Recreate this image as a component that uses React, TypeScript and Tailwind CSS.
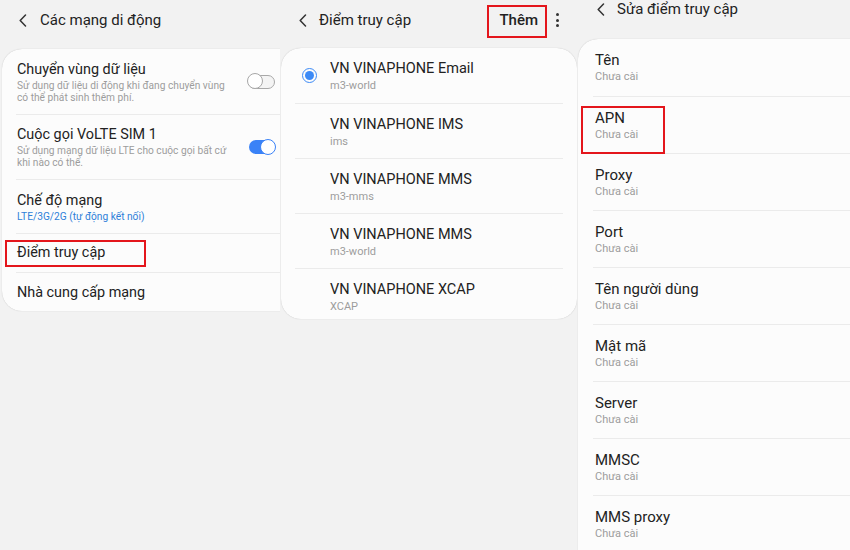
import React from "react";

const font = { fontFamily: "Roboto, 'Noto Sans', sans-serif" };

function Back() {
  return (
    <svg width="8" height="13" viewBox="0 0 8 13" fill="none">
      <path d="M6.5 1 L1.2 6.5 L6.5 12" stroke="#333" strokeWidth="1.5" strokeLinecap="round" strokeLinejoin="round" />
    </svg>
  );
}

function Toggle({ on }: { on: boolean }) {
  if (on) {
    return (
      <div className="relative h-[14px] w-[26px] rounded-full bg-[#3a82f7]">
        <div className="absolute right-[-1px] top-[-1px] h-[16px] w-[16px] rounded-full border-[1.5px] border-[#3a82f7] bg-white" />
      </div>
    );
  }
  return (
    <div className="relative h-[14px] w-[27px] rounded-full border-[1.5px] border-[#a8a8a8] bg-[#f4f4f4]">
      <div className="absolute left-[-2px] top-[-2.5px] h-[16px] w-[16px] rounded-full border-[1.5px] border-[#a8a8a8] bg-white" />
    </div>
  );
}

function RedBox({ className }: { className: string }) {
  return <div className={`pointer-events-none absolute border-2 border-[#e4161c] ${className}`} />;
}

function PanelMobileNetworks() {
  return (
    <div className="relative h-full w-[280px] shrink-0 overflow-hidden bg-[#f2f2f2]">
      <div className="flex h-[40px] items-center gap-[13px] pl-[19px] pt-[1px]">
        <Back />
        <span className="text-[15px] text-[#222]">Các mạng di động</span>
      </div>
      <div className="ml-[2px] mt-[9px] rounded-l-[20px] bg-[#fcfcfc] shadow-[0_0_1px_rgba(0,0,0,0.25)]">
        <div className="flex h-[65px] items-center pl-[15px] pr-[5px]">
          <div className="flex-1">
            <div className="text-[14.4px] leading-[20px] text-[#222]">Chuyển vùng dữ liệu</div>
            <div className="text-[10.2px] leading-[12px] text-[#9c9c9c]">
              Sử dụng dữ liệu di động khi đang chuyển vùng
              <br />
              có thể phát sinh thêm phí.
            </div>
          </div>
          <Toggle on={false} />
        </div>
        <div className="ml-[14px] flex h-[65px] items-center border-t border-[#ebebeb] pl-[1px] pr-[5px]">
          <div className="flex-1">
            <div className="text-[14.4px] leading-[20px] text-[#222]">Cuộc gọi VoLTE SIM 1</div>
            <div className="text-[10.2px] leading-[12px] text-[#9c9c9c]">
              Sử dụng mạng dữ liệu LTE cho cuộc gọi bất cứ
              <br />
              khi nào có thể.
            </div>
          </div>
          <Toggle on={true} />
        </div>
        <div className="ml-[14px] flex h-[54px] items-center border-t border-[#ebebeb] pl-[1px]">
          <div>
            <div className="text-[14.4px] leading-[20px] text-[#222]">Chế độ mạng</div>
            <div className="text-[10.2px] leading-[12px] text-[#2e7fd9]">LTE/3G/2G (tự động kết nối)</div>
          </div>
        </div>
        <div className="ml-[14px] flex h-[39px] items-center border-t border-[#ebebeb] pl-[1px]">
          <div className="text-[14.4px] leading-[20px] text-[#222]">Điểm truy cập</div>
        </div>
        <div className="ml-[14px] flex h-[39px] items-center border-t border-[#ebebeb] pl-[1px] pt-[2px]">
          <div className="text-[14.4px] leading-[20px] text-[#222]">Nhà cung cấp mạng</div>
        </div>
      </div>
      <RedBox className="left-[5px] top-[240px] h-[27px] w-[141px]" />
    </div>
  );
}

const apns = [
  { name: "VN VINAPHONE Email", apn: "m3-world", selected: true },
  { name: "VN VINAPHONE IMS", apn: "ims" },
  { name: "VN VINAPHONE MMS", apn: "m3-mms" },
  { name: "VN VINAPHONE MMS", apn: "m3-world" },
  { name: "VN VINAPHONE XCAP", apn: "XCAP" },
];

function PanelAccessPoints() {
  return (
    <div className="relative h-full w-[297px] shrink-0 overflow-hidden bg-[#f2f2f2]">
      <div className="flex h-[40px] items-center pl-[19px] pr-[18px]">
        <Back />
        <span className="ml-[12px] text-[15px] text-[#222]">Điểm truy cập</span>
        <span className="ml-auto text-[15px] font-medium text-[#222]">Thêm</span>
        <div className="ml-[18px] flex flex-col gap-[2.5px]">
          <span className="h-[3px] w-[3px] rounded-full bg-[#333]" />
          <span className="h-[3px] w-[3px] rounded-full bg-[#333]" />
          <span className="h-[3px] w-[3px] rounded-full bg-[#333]" />
        </div>
      </div>
      <div className="ml-[1px] mt-[8px] w-[296px] rounded-[20px] bg-[#fcfcfc] pb-[1px] shadow-[0_0_1px_rgba(0,0,0,0.25)]">
        {apns.map((a, i) => (
          <div key={i} className={`mx-[14px] flex items-start pt-[11px] ${i > 0 ? "border-t border-[#ebebeb]" : ""} ${i === apns.length - 1 ? "h-[50px]" : "h-[55px]"}`}>
            <div className="w-[35px] pl-[7px] pt-[9px]">
              {a.selected ? (
                <div className="flex h-[15px] w-[15px] items-center justify-center rounded-full border-[1.5px] border-[#3c8af6]">
                  <div className="h-[9px] w-[9px] rounded-full bg-[#3c8af6]" />
                </div>
              ) : null}
            </div>
            <div>
              <div className="text-[14.5px] leading-[20px] text-[#222]">{a.name}</div>
              <div className="text-[11px] leading-[14px] text-[#9c9c9c]">{a.apn}</div>
            </div>
          </div>
        ))}
      </div>
      <RedBox className="left-[207px] top-[5px] h-[33px] w-[60px]" />
    </div>
  );
}

const fields = ["Tên", "APN", "Proxy", "Port", "Tên người dùng", "Mật mã", "Server", "MMSC", "MMS proxy"];

function PanelEditAccessPoint() {
  return (
    <div className="relative h-full flex-1 overflow-hidden bg-[#f2f2f2]">
      <div className="flex h-[18px] items-center gap-[12px] pl-[20px]">
        <Back />
        <span className="text-[15px] text-[#222]">Sửa điểm truy cập</span>
      </div>
      <div className="ml-[1px] mt-[21px] rounded-tl-[20px] bg-[#fcfcfc] shadow-[0_0_1px_rgba(0,0,0,0.25)]">
        {fields.map((f, i) => (
          <div key={f} className={`ml-[15px] h-[57px] pl-[2px] pt-[11px] ${i > 0 ? "border-t border-[#ebebeb]" : ""}`}>
            <div className="text-[15px] leading-[20px] text-[#222]">{f}</div>
            <div className="text-[11px] leading-[14px] text-[#9c9c9c]">Chưa cài</div>
          </div>
        ))}
      </div>
      <RedBox className="left-[4px] top-[106px] h-[48px] w-[84px]" />
    </div>
  );
}

export default function App() {
  return (
    <div className="flex h-[550px] w-[850px] overflow-hidden bg-[#f2f2f2]" style={font}>
      <PanelMobileNetworks />
      <PanelAccessPoints />
      <PanelEditAccessPoint />
    </div>
  );
}
